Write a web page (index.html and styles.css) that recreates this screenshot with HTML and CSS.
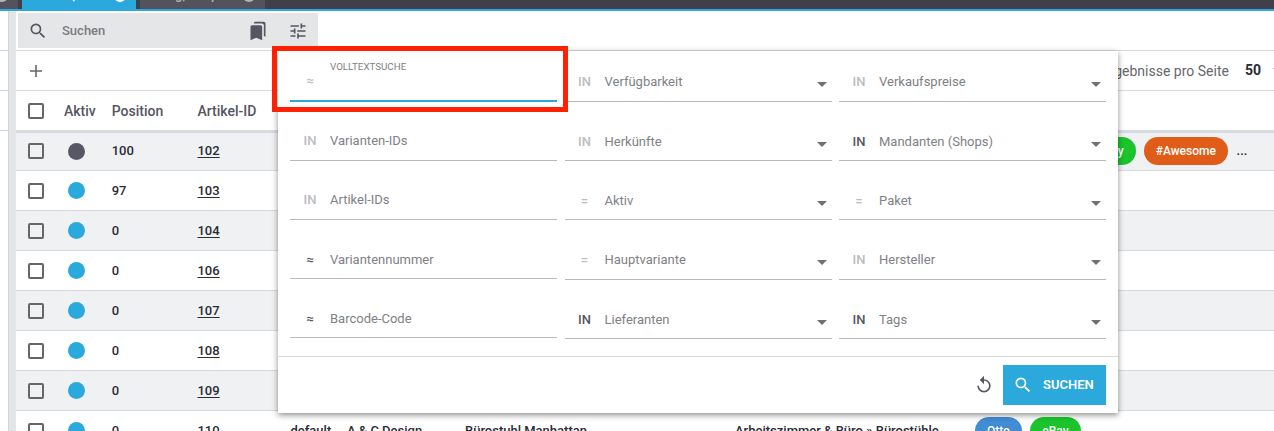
FILE: index.html
```html
<!DOCTYPE html>
<html lang="de">
<head>
<meta charset="utf-8">
<title>Artikel</title>
<link rel="stylesheet" href="styles.css">
</head>
<body>
<nav class="tabs">
  <div class="tab tab-first"><i class="close"></i></div>
  <div class="tab tab-active"><span>Artikel, neu</span><i class="close"></i></div>
  <div class="tab tab-last"><span>Katalog, Shop 1</span><i class="close"></i></div>
</nav>
<div class="layout">
  <aside class="side"><div></div><div></div><div></div></aside>
  <div class="gutter"></div>
  <main class="main">
    <div class="search-row">
      <div class="search">
        <svg class="ic ic-search" viewBox="0 0 24 24"><path d="M15.5 14h-.79l-.28-.27A6.47 6.47 0 0 0 16 9.5 6.5 6.5 0 1 0 9.5 16c1.61 0 3.09-.59 4.23-1.57l.27.28v.79l5 4.99L20.49 19l-4.99-5zm-6 0C7.01 14 5 11.99 5 9.5S7.01 5 9.5 5 14 7.01 14 9.5 11.99 14 9.5 14z"/></svg>
        <span class="search-text">Suchen</span>
        <svg class="ic ic-marks" viewBox="0 0 24 24"><path d="M19 18l2 1V3c0-1.100-.9-2-2-2H8.990C7.890 1 7 1.900 7 3h10c1.100 0 2 .9 2 2v13zM15 5H5c-1.100 0-2 .9-2 2v16l7-3 7 3V7c0-1.100-.9-2-2-2z"/></svg>
        <svg class="ic ic-tune" viewBox="0 0 24 24"><path d="M3 17v2h6v-2H3zM3 5v2h10V5H3zm10 16v-2h8v-2h-8v-2h-2v6h2zM7 9v2H3v2h4v2h2V9H7zm14 4v-2H11v2h10zm-6-4h2V7h4V5h-4V3h-2v6z"/></svg>
      </div>
    </div>
    <div class="tool-row">
      <svg class="ic-plus" viewBox="0 0 12 12"><path d="M6 0v12M0 6h12"/></svg>
      <div class="pager"><span class="pager-label">Ergebnisse pro Seite</span><b>50</b><i class="caret"></i></div>
    </div>
    <div class="row head"><i class="box"></i><span>Aktiv</span><span>Position</span><span>Artikel-ID</span></div>
    <div class="row first odd"><i class="box"></i><i class="dot off"></i><span>100</span><u>102</u>
      <div class="tags"><em class="tag blue">Otto</em><em class="tag green">eBay</em><em class="tag green third">eBay</em><em class="tag orange">#Awesome</em><span class="more">...</span></div></div>
    <div class="row"><i class="box"></i><i class="dot"></i><span>97</span><u>103</u></div>
    <div class="row odd"><i class="box"></i><i class="dot"></i><span>0</span><u>104</u></div>
    <div class="row"><i class="box"></i><i class="dot"></i><span>0</span><u>106</u></div>
    <div class="row odd"><i class="box"></i><i class="dot"></i><span>0</span><u>107</u></div>
    <div class="row"><i class="box"></i><i class="dot"></i><span>0</span><u>108</u></div>
    <div class="row odd"><i class="box"></i><i class="dot"></i><span>0</span><u>109</u></div>
    <div class="row"><i class="box"></i><i class="dot"></i><span>0</span><u>110</u><span>default</span><span>A &amp; C Design</span><span>Bürostuhl Manhattan</span><span>Arbeitszimmer &amp; Büro » Bürostühle</span>
      <div class="tags"><em class="tag blue">Otto</em><em class="tag green">eBay</em></div></div>
  </main>
</div>

<section class="panel">
  <div class="fields">
    <div class="col inputs">
      <div class="field focus"><b class="op sym">≈</b><span class="label float">VOLLTEXTSUCHE</span></div>
      <div class="field"><b class="op">IN</b><span class="label">Varianten-IDs</span></div>
      <div class="field"><b class="op">IN</b><span class="label">Artikel-IDs</span></div>
      <div class="field"><b class="op sym on">≈</b><span class="label">Variantennummer</span></div>
      <div class="field"><b class="op sym on">≈</b><span class="label">Barcode-Code</span></div>
    </div>
    <div class="col">
      <div class="field"><b class="op">IN</b><span class="label">Verfügbarkeit</span><i class="caret"></i></div>
      <div class="field"><b class="op">IN</b><span class="label">Herkünfte</span><i class="caret"></i></div>
      <div class="field"><b class="op">=</b><span class="label">Aktiv</span><i class="caret"></i></div>
      <div class="field"><b class="op">=</b><span class="label">Hauptvariante</span><i class="caret"></i></div>
      <div class="field"><b class="op on">IN</b><span class="label">Lieferanten</span><i class="caret"></i></div>
    </div>
    <div class="col">
      <div class="field"><b class="op">IN</b><span class="label">Verkaufspreise</span><i class="caret"></i></div>
      <div class="field"><b class="op on">IN</b><span class="label">Mandanten (Shops)</span><i class="caret"></i></div>
      <div class="field"><b class="op">=</b><span class="label">Paket</span><i class="caret"></i></div>
      <div class="field"><b class="op">IN</b><span class="label">Hersteller</span><i class="caret"></i></div>
      <div class="field"><b class="op on">IN</b><span class="label">Tags</span><i class="caret"></i></div>
    </div>
  </div>
  <footer class="actions">
    <svg class="ic-reset" viewBox="0 0 24 24"><path d="M12 5V1L7 6l5 5V7c3.310 0 6 2.690 6 6s-2.690 6-6 6-6-2.690-6-6H4c0 4.420 3.580 8 8 8s8-3.580 8-8-3.580-8-8-8z"/></svg>
    <button class="submit"><svg viewBox="0 0 24 24"><path d="M15.5 14h-.79l-.28-.27A6.47 6.47 0 0 0 16 9.5 6.500 6.500 0 1 0 9.500 16c1.610 0 3.090-.59 4.230-1.570l.27.28v.79l5 4.990L20.490 19l-4.990-5zm-6 0C7.010 14 5 11.990 5 9.500S7.010 5 9.500 5 14 7.010 14 9.500 11.990 14 9.500 14z"/></svg>SUCHEN</button>
  </footer>
</section>
<div class="marker"></div>
</body>
</html>
```

FILE: styles.css
```css
* { box-sizing: border-box; }
body {
  margin: 0;
  width: 1274px;
  height: 431px;
  overflow: hidden;
  position: relative;
  background: #fff;
  font: 500 13px/20px Roboto, sans-serif;
  color: #2a2b35;
}
i, em { font-style: normal; }

.tabs {
  display: flex;
  gap: 4px;
  height: 11px;
  border-bottom: 2px solid #2ba8dc;
  background: #3f404a;
}
.tab {
  display: flex;
  align-items: flex-end;
  justify-content: flex-end;
  height: 9px;
  padding-right: 10px;
  overflow: hidden;
  background: #53535e;
  color: #b4b4ba;
}
.tab span { margin: 0 14px 4px 0; white-space: nowrap; }
.tab .close {
  flex: none;
  width: 12px;
  height: 12px;
  margin-bottom: 7px;
  border-radius: 50%;
  background: #b4b4ba;
}
.tab-first { width: 18px; }
.tab-active { width: 114px; background: #2ba8dc; color: #fff; }
.tab-active .close { background: #fff; }
.tab-last { width: 125px; }

.layout { display: flex; height: 420px; }
.side { width: 8px; }
.side div { height: 40px; border-bottom: 1px solid #d5d7dd; }
.gutter { width: 8px; border-left: 1px solid #d3d5d9; background: #e3e5e7; }
.main { flex: 1; min-width: 0; overflow: hidden; }

.search-row { height: 40px; padding: 2px 0 0 2px; border-bottom: 1px solid #d8dae1; }
.search {
  display: flex;
  align-items: center;
  width: 300px;
  height: 35px;
  padding: 0 10px;
  background: #e5e6e8;
  fill: #555661;
}
.ic { width: 20px; height: 20px; }
.search-text { flex: 1; padding-left: 14px; color: #7b7c80; }
.ic-marks { margin-right: 20px; }

.tool-row {
  display: flex;
  align-items: center;
  height: 40px;
  padding-left: 14px;
  border-bottom: 1px solid #d8dae1;
}
.ic-plus { width: 12px; height: 12px; stroke: #666; stroke-width: 1.6; }
.pager { display: flex; align-items: center; margin-left: auto; white-space: nowrap; }
.pager-label { margin-right: 16px; font-size: 14px; font-weight: 400; color: #66676d; }
.pager b { margin-right: 12px; font-size: 14px; line-height: 20px; padding-bottom: 1px; }
.caret {
  flex: none;
  border: 5px solid transparent;
  border-top-color: #707073;
  border-bottom: 0;
}
.pager .caret { margin-right: -9px; }

.row {
  display: grid;
  grid-template-columns: 36px 47.700px 85.800px 93px 56.500px 118px 270px 240px 1fr;
  align-items: center;
  height: 40px;
  padding-left: 12px;
  border-bottom: 1px solid #d5d8de;
  white-space: nowrap;
}
.row.odd { background: #f0f1f3; }
.row.head { color: #555661; border-bottom: 0; font-size: 14px; }
.row.head { height: 39px; padding-top: 1px; }
.row.first { height: 41px; padding-bottom: 1px; border-top: 3px solid #d8dae2; }
.box { width: 16px; height: 16px; border: 2px solid #666; border-radius: 2px; }
.dot { width: 17px; height: 17px; margin-left: 3.500px; border-radius: 50%; background: #2ba8dc; }
.dot.off { background: #575864; }
.row u { text-underline-offset: 2px; }
.tags { display: flex; align-items: center; gap: 8px; grid-column: 9; }
.tag {
  flex: none;
  height: 28px;
  padding: 0 12px;
  border-radius: 14px;
  color: #fff;
  font-size: 12px;
  line-height: 28px;
}
.blue { background: #418cd2; }
.green { padding: 0 12.400px; background: #1bc42b; }
.third { margin-left: -4px; }
.orange { background: #df5d18; padding: 0 11.700px; }
.more { margin-left: 1px; }

.panel {
  position: absolute;
  left: 278px;
  top: 51px;
  width: 840px;
  height: 362px;
  background: #fff;
  box-shadow: 0 2px 6px rgba(0, 0, 0, .45);
}
.fields { display: flex; gap: 7.500px; height: 305px; padding: 0 12px; }
.col { width: 267px; }
.field {
  display: flex;
  align-items: flex-end;
  height: 59.400px;
  padding-bottom: 8.350px;
  border-bottom: 1px solid #b9b9bb;
}
.field:first-child { height: 50.550px; }
.inputs .field { height: 59.100px; padding-bottom: 8.750px; }
.inputs .field:first-child { height: 51px; }
.op { width: 40px; text-align: center; font-weight: 500; color: #bcbcbf; }
.op.on { color: #555661; }
.label { flex: 1; color: #808186; font-weight: 400; }
.label.float { align-self: flex-start; margin-top: 6px; font-size: 9.750px; }
.field .caret { margin: 0 5px 5px 0; }
.field.focus { border-bottom: 2px solid #2ba8dc; }

.actions {
  display: flex;
  align-items: center;
  justify-content: flex-end;
  height: 57px;
  padding-right: 12px;
  border-top: 1px solid #d8dadd;
}
.ic-reset { width: 20px; height: 20px; margin-right: 9px; fill: #555661; }
.submit {
  display: flex;
  align-items: center;
  gap: 10px;
  width: 103px;
  height: 40px;
  padding: 0 0 1px 10px;
  border: 0;
  background: #2ba8dc;
  color: #fff;
  font: 600 13px Roboto, sans-serif;
}
.submit svg { width: 20px; height: 20px; fill: #fff; }

.marker {
  position: absolute;
  left: 272px;
  top: 46px;
  width: 296px;
  height: 66px;
  border: 5px solid #ff2101;
}
```
